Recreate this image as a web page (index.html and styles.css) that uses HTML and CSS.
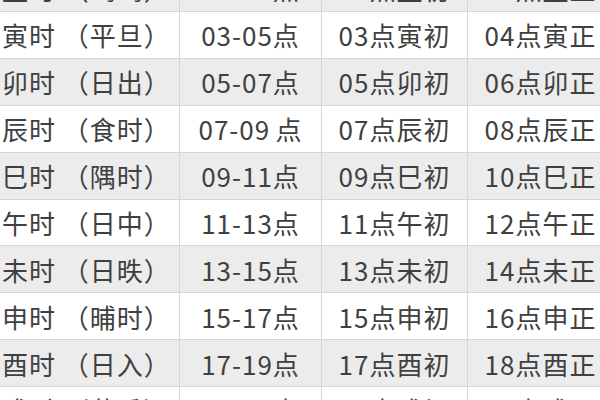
FILE: index.html
```html
<!DOCTYPE html>
<html lang="zh-CN">
<head>
<meta charset="utf-8">
<title>十二时辰</title>
<link rel="stylesheet" href="styles.css">
</head>
<body>
<div class="table">
  <div class="row alt"><div class="cell first">丑时 （鸡鸣）</div><div class="cell">01-03点</div><div class="cell">01点丑初</div><div class="cell">02点丑正</div></div>
  <div class="row"><div class="cell first">寅时 （平旦）</div><div class="cell">03-05点</div><div class="cell">03点寅初</div><div class="cell">04点寅正</div></div>
  <div class="row alt"><div class="cell first">卯时 （日出）</div><div class="cell">05-07点</div><div class="cell">05点卯初</div><div class="cell">06点卯正</div></div>
  <div class="row"><div class="cell first">辰时 （食时）</div><div class="cell">07-09&#8198;点</div><div class="cell">07点辰初</div><div class="cell">08点辰正</div></div>
  <div class="row alt"><div class="cell first">巳时 （隅时）</div><div class="cell">09-11点</div><div class="cell">09点巳初</div><div class="cell">10点巳正</div></div>
  <div class="row"><div class="cell first">午时 （日中）</div><div class="cell">11-13点</div><div class="cell">11点午初</div><div class="cell">12点午正</div></div>
  <div class="row alt"><div class="cell first">未时 （日昳）</div><div class="cell">13-15点</div><div class="cell">13点未初</div><div class="cell">14点未正</div></div>
  <div class="row"><div class="cell first">申时 （晡时）</div><div class="cell">15-17点</div><div class="cell">15点申初</div><div class="cell">16点申正</div></div>
  <div class="row alt"><div class="cell first">酉时 （日入）</div><div class="cell">17-19点</div><div class="cell">17点酉初</div><div class="cell">18点酉正</div></div>
  <div class="row"><div class="cell first">戌时 （黄昏）</div><div class="cell">19-21点</div><div class="cell">19点戌初</div><div class="cell">20点戌正</div></div>
</div>
</body>
</html>
```

FILE: styles.css
```css
html, body {
  margin: 0;
  padding: 0;
  width: 600px;
  height: 400px;
  overflow: hidden;
  background: #ffffff;
}

.table {
  width: 614px;
  margin-top: -34.875px;
  font-family: "Noto Sans CJK SC", "Noto Sans", sans-serif;
  font-size: 26px;
  letter-spacing: 1px;
  color: #404040;
}

.row {
  display: grid;
  grid-template-columns: 180px 142px 146px 146px;
  height: 46.875px;
  box-sizing: border-box;
  border-bottom: 1px solid #d6d6d6;
  background: #ffffff;
}

.row.alt {
  background: #ececec;
}

.cell {
  display: flex;
  align-items: center;
  justify-content: center;
  box-sizing: border-box;
  border-right: 1px solid #d6d6d6;
  white-space: pre;
}

.cell.first {
  justify-content: flex-start;
  padding-left: 2px;
}
```
